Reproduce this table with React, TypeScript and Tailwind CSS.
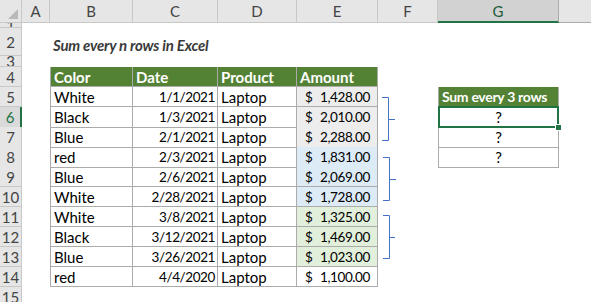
import React from 'react';

type DataRow = {
  n: number;
  color: string;
  date: string;
  amount: string;
  amountBg: string;
};

const rows: DataRow[] = [
  { n: 5, color: 'White', date: '1/1/2021', amount: '1,428.00', amountBg: 'bg-[#ededed]' },
  { n: 6, color: 'Black', date: '1/3/2021', amount: '2,010.00', amountBg: 'bg-[#ededed]' },
  { n: 7, color: 'Blue', date: '2/1/2021', amount: '2,288.00', amountBg: 'bg-[#ededed]' },
  { n: 8, color: 'red', date: '2/3/2021', amount: '1,831.00', amountBg: 'bg-[#ddebf7]' },
  { n: 9, color: 'Blue', date: '2/6/2021', amount: '2,069.00', amountBg: 'bg-[#ddebf7]' },
  { n: 10, color: 'White', date: '2/28/2021', amount: '1,728.00', amountBg: 'bg-[#ddebf7]' },
  { n: 11, color: 'White', date: '3/8/2021', amount: '1,325.00', amountBg: 'bg-[#e2efda]' },
  { n: 12, color: 'Black', date: '3/12/2021', amount: '1,469.00', amountBg: 'bg-[#e2efda]' },
  { n: 13, color: 'Blue', date: '3/26/2021', amount: '1,023.00', amountBg: 'bg-[#e2efda]' },
  { n: 14, color: 'red', date: '4/4/2020', amount: '1,100.00', amountBg: 'bg-white' },
];

const COLS = 'grid grid-cols-[22px_28px_83px_85px_79px_81px_60px_121px_32px]';
const ROWHEAD = 'flex items-center justify-center overflow-hidden bg-[#e6e6e6] border-r border-b border-[#c8c8c8] text-[#444444]';
const CELL = 'flex items-center overflow-hidden whitespace-nowrap border-r border-b border-[#ababab]';
// Lato digits run wide, so numbers go a little smaller than the text
const NUM = 'text-[13.5px] tracking-[-0.4px]';

const RowHead = ({ n, selected }: { n: number | string; selected?: boolean }) =>
  selected ? (
    <div className="flex items-center justify-center overflow-hidden bg-[#dadada] border-r-2 border-r-[#217346] border-b border-b-[#c8c8c8] text-[#217346]">
      {n}
    </div>
  ) : (
    <div className={ROWHEAD}>{n}</div>
  );

// right-hand cell of the little result table in column G
const GCell = ({ n }: { n: number }) => {
  if (n === 5)
    return (
      <div className="flex items-center overflow-hidden whitespace-nowrap border-l border-r border-b border-[#ababab] bg-[#548235] pl-[3px] text-[14px] font-bold tracking-[-0.3px] text-white">
        Sum every 3 rows
      </div>
    );
  if (n === 6)
    return (
      <div className="relative flex items-center justify-center border-l border-r border-b border-[#ababab]">
        ?
        <div className="absolute -left-px -top-px -right-px -bottom-px border-2 border-[#217346]" />
        <div className="absolute -right-[4px] -bottom-[4px] h-[7px] w-[7px] border border-white bg-[#217346]" />
      </div>
    );
  if (n === 7 || n === 8)
    return (
      <div className="flex items-center justify-center border-l border-r border-b border-[#ababab]">?</div>
    );
  return <div />;
};

export default function App() {
  return (
    <div className="relative h-[302px] w-[591px] overflow-hidden bg-white text-[15px] leading-[20px] text-black font-['Lato',sans-serif]">
      {/* column header */}
      <div className={`${COLS} h-[23px]`}>
        <div className="relative bg-[#e6e6e6] border-r border-b border-[#c8c8c8]">
          <svg className="absolute left-0 top-0" width="21" height="22">
            <polygon points="18,9 18,19 8,19" fill="#b9b9b9" />
          </svg>
        </div>
        {['A', 'B', 'C', 'D', 'E', 'F'].map((l) => (
          <div key={l} className="flex items-center justify-center bg-[#e6e6e6] border-r border-b border-[#c8c8c8] text-[#444444]">
            {l}
          </div>
        ))}
        <div className="flex items-center justify-center bg-[#d2d2d2] border-r border-r-[#ababab] border-b-2 border-b-[#217346] text-[#1d5b38]">
          G
        </div>
        <div className="bg-[#e6e6e6] border-b border-[#ababab]" />
      </div>

      {/* row 1 */}
      <div className={`${COLS} h-[5px]`}>
        <RowHead n={1} />
      </div>

      {/* row 2 - title */}
      <div className={`${COLS} h-[28px]`}>
        <RowHead n={2} />
        <div />
        <div className="col-span-4 flex items-center whitespace-nowrap pl-[3px] pt-[5px] font-bold italic tracking-[-0.2px] text-[#3a3a3a]">
          Sum every n rows in Excel
        </div>
      </div>

      {/* row 3 */}
      <div className={`${COLS} h-[11px]`}>
        <RowHead n={3} />
      </div>

      {/* row 4 - table header */}
      <div className={`${COLS} h-[20px]`}>
        <RowHead n={4} />
        <div />
        <div className={`${CELL} border-l bg-[#548235] pl-[3px] font-bold text-white`}>Color</div>
        <div className={`${CELL} bg-[#548235] pl-[3px] font-bold text-white`}>Date</div>
        <div className={`${CELL} bg-[#548235] pl-[3px] font-bold text-white`}>Product</div>
        <div className={`${CELL} bg-[#548235] pl-[3px] font-bold text-white`}>Amount</div>
      </div>

      {rows.map((r) => (
        <div key={r.n} className={`${COLS} h-[20px]`}>
          <RowHead n={r.n} selected={r.n === 6} />
          <div />
          <div className={`${CELL} border-l pl-[3px]`}>{r.color}</div>
          <div className={`${CELL} ${NUM} justify-end pr-[2px]`}>{r.date}</div>
          <div className={`${CELL} pl-[3px]`}>Laptop</div>
          <div className={`${CELL} ${NUM} ${r.amountBg} justify-between pl-[8px] pr-[7px]`}>
            <span>$</span>
            <span>{r.amount}</span>
          </div>
          <div />
          <GCell n={r.n} />
        </div>
      ))}

      {/* row 15 */}
      <div className={`${COLS} h-[20px]`}>
        <RowHead n={15} />
      </div>

      {/* bracket shapes */}
      <svg className="pointer-events-none absolute left-0 top-0" width="591" height="302">
        <g fill="none" stroke="#4472c4" strokeWidth="1">
          <path d="M382 97.5 H388.5 V140.5 H382 M388.5 119.5 H395" />
          <path d="M383 157.5 H389.5 V200.5 H383 M389.5 179.5 H396" />
          <path d="M383 215.5 H389.5 V258.5 H383 M389.5 237.5 H395" />
        </g>
      </svg>
    </div>
  );
}
